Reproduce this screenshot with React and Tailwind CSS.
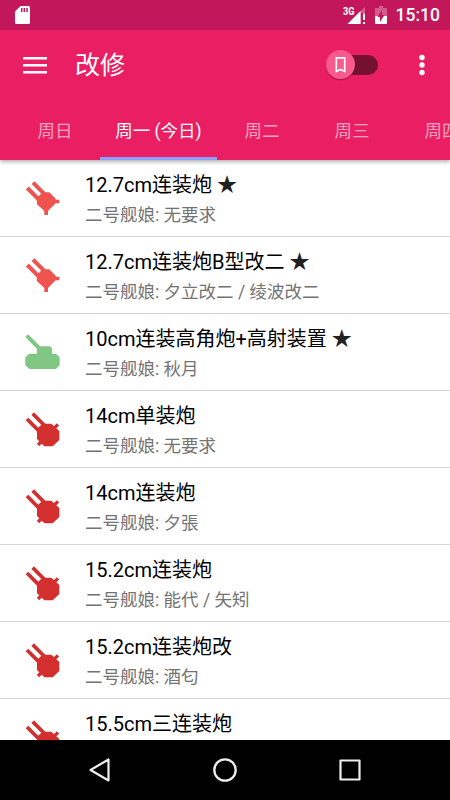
import React from 'react';

const days = [
  { label: '周日', width: 'w-[90px]' },
  { label: '周一 (今日)', width: 'w-[117px]', active: true },
  { label: '周二', width: 'w-[90px]' },
  { label: '周三', width: 'w-[90px]' },
  { label: '周四', width: 'w-[90px]' },
];

const items = [
  { icon: 'small', name: '12.7cm连装炮', star: true, second: '无要求' },
  { icon: 'small', name: '12.7cm连装炮B型改二', star: true, second: '夕立改二 / 绫波改二' },
  { icon: 'highAngle', name: '10cm连装高角炮+高射装置', star: true, second: '秋月' },
  { icon: 'medium', name: '14cm单装炮', second: '无要求' },
  { icon: 'medium', name: '14cm连装炮', second: '夕張' },
  { icon: 'medium', name: '15.2cm连装炮', second: '能代 / 矢矧' },
  { icon: 'medium', name: '15.2cm连装炮改', second: '酒匂' },
  { icon: 'medium', name: '15.5cm三连装炮' },
];

function SmallGun() {
  return (
    <svg className="w-10 h-10 shrink-0" viewBox="36 36 120 120" fill="#ef5350" stroke="#ef5350">
      <path d="M52 69L88 105M69 53L105 89" strokeWidth="12" />
      <path stroke="none" d="M80 99L98 82H118L137 101V104H148V115H137L114 138V150H103V138L81 118Z" />
    </svg>
  );
}

function MediumGun() {
  return (
    <svg className="w-10 h-10 shrink-0" viewBox="36 24 120 120" fill="#d32f2f" stroke="#d32f2f">
      <path d="M51 57L88 94M68 41L105 78" strokeWidth="11" />
      <path d="M130 87L144 73M99 120L84 135" strokeWidth="10" />
      <path stroke="none" d="M97 71H124L148 93V120L128 139H103L81 117V87Z" />
    </svg>
  );
}

function HighAngleGun() {
  return (
    <svg className="w-10 h-10 shrink-0" viewBox="36 33 120 120" fill="#81c784" stroke="#81c784">
      <path d="M50 47L90 87" strokeWidth="12" />
      <path stroke="none" d="M81 102V84L86 79H120L126 85V102ZM58 101H138L149 112V136L138 147H58L46 136V112Z" />
    </svg>
  );
}

const icons = { small: SmallGun, medium: MediumGun, highAngle: HighAngleGun };

function StatusBar() {
  return (
    <div className="h-[30px] shrink-0 bg-[#c2185b] flex items-center pl-[15px] pr-[10px] text-white">
      <svg className="w-[15px] h-[18px]" viewBox="0 0 15 18">
        <path fill="#fff" d="M5.5 0H13.5Q15 0 15 1.5V16.5Q15 18 13.5 18H1.5Q0 18 0 16.5V5.5Z" />
        <path stroke="#c2185b" strokeWidth="1.5" d="M6.7 2V6M9.3 2V6M12 2V6" />
      </svg>
      <div className="flex-1" />
      <svg className="w-[23px] h-[20px] mr-[9px]" viewBox="0 0 23 20">
        <text x="0" y="9.500" fill="#fff" fontSize="10" fontWeight="700" fontFamily="Roboto" textLength="11.5" lengthAdjust="spacingAndGlyphs">3G</text>
        <path fill="#fff" fillOpacity="0.3" d="M22 2V8H18V19H4.500Z" />
        <path fill="#fff" d="M17.500 6V19H4.500Z" />
        <path fill="#fff" d="M20 8.500H22V15H20ZM20 17H22V19H20Z" />
      </svg>
      <svg className="w-[12px] h-[18px] mr-[9px]" viewBox="0 0 12 18">
        <path fill="#fff" fillOpacity="0.3" d="M4 0H8V2H12V10H0V2H4Z" />
        <path fill="#fff" d="M0 10H12V17Q12 18 11 18H1Q0 18 0 17Z" />
        <path fill="#c2185b" d="M7 4V9H9.500L5 16V11H2.500Z" />
      </svg>
      <span className="pt-[2px] text-[17.5px] leading-none font-medium">15:10</span>
    </div>
  );
}

function Toolbar() {
  return (
    <div className="h-[70px] shrink-0 flex items-center pl-[23px] pr-[25px] text-white">
      <svg className="w-6 h-[18px]" viewBox="0 0 24 18">
        <path stroke="#fff" strokeWidth="2.600" d="M0 2.300H24M0 9.300H24M0 16.200H24" />
      </svg>
      <h1 className="ml-[28px] pt-px text-[25px] leading-none font-normal">改修</h1>
      <div className="flex-1" />
      <svg className="w-[56px] h-[34px] mr-[39px]" viewBox="0 0 56 34">
        <rect x="11" y="7" width="43" height="20" rx="10" fill="#75102f" />
        <circle cx="16.500" cy="17.500" r="14.700" fill="#000" fillOpacity="0.22" />
        <circle cx="16.500" cy="16.500" r="14.500" fill="#f8598f" />
        <path fill="none" stroke="#fff" strokeWidth="1.700" d="M12.300 9.800H20.700V23.500L16.500 21.500L12.300 23.500Z" />
      </svg>
      <svg className="w-[6px] h-[22px]" viewBox="0 0 6 22" fill="#fff">
        <circle cx="3" cy="3.500" r="2.700" />
        <circle cx="3" cy="11" r="2.700" />
        <circle cx="3" cy="18.500" r="2.700" />
      </svg>
    </div>
  );
}

function Tabs() {
  return (
    <div className="h-[60px] shrink-0 flex pl-[10px] overflow-hidden">
      {days.map((day) => (
        <div
          key={day.label}
          className={`${day.width} shrink-0 flex items-center justify-center text-[17.5px] whitespace-nowrap border-b-[3px] pt-[5px] ${
            day.active ? 'text-white border-[#8c9eff]' : 'text-white/60 border-transparent'
          }`}
        >
          {day.label}
        </div>
      ))}
    </div>
  );
}

function Item({ item }) {
  const Icon = icons[item.icon];

  return (
    <div className="h-[77px] shrink-0 flex items-start pl-[22px] border-b border-[#d4d4d4]">
      <div className="pt-[17px]">
        <Icon />
      </div>
      <div className="ml-[23px] pt-[10px] whitespace-nowrap">
        <div className="text-[20px] leading-[30px] text-black">
          {item.name}
          {item.star && <span className="text-[#212121]"> ★</span>}
        </div>
        {item.second && (
          <div className="text-[17.5px] leading-[30px] text-[#737373]">二号舰娘: {item.second}</div>
        )}
      </div>
    </div>
  );
}

function NavBar() {
  return (
    <div className="h-[60px] shrink-0 bg-black flex items-center justify-center gap-[101px]">
      <svg className="w-6 h-6" viewBox="0 0 24 24" fill="none" stroke="#eee" strokeWidth="2.200" strokeLinejoin="round">
        <path d="M20.500 1.500V22.500L2.500 12Z" />
      </svg>
      <svg className="w-6 h-6" viewBox="0 0 24 24" fill="none" stroke="#eee" strokeWidth="2.300">
        <circle cx="12" cy="12" r="10.700" />
      </svg>
      <svg className="w-6 h-6" viewBox="0 0 24 24" fill="none" stroke="#eee" strokeWidth="2.200" strokeLinejoin="round">
        <rect x="2.500" y="2.500" width="19" height="19" />
      </svg>
    </div>
  );
}

export default function App() {
  return (
    <div className="w-[450px] h-[800px] flex flex-col overflow-hidden bg-white font-[Roboto,'Noto_Sans_CJK_SC',sans-serif]">
      <header className="relative z-10 shrink-0 flex flex-col bg-[#e91e63] shadow-[0_2px_4px_rgba(0,0,0,0.3)]">
        <StatusBar />
        <Toolbar />
        <Tabs />
      </header>
      <main className="flex-1 min-h-0 flex flex-col overflow-hidden">
        {items.map((item) => (
          <Item key={item.name} item={item} />
        ))}
      </main>
      <NavBar />
    </div>
  );
}
